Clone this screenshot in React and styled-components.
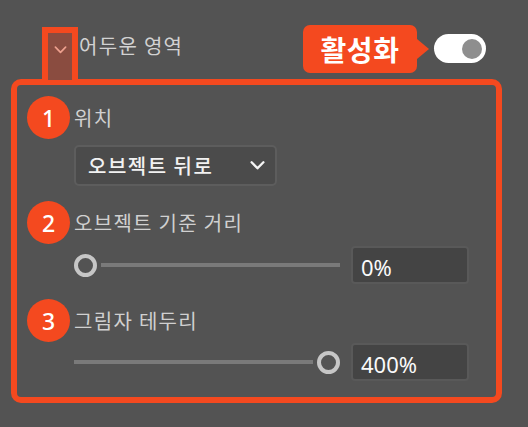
import React from "react";
import styled, { createGlobalStyle } from "styled-components";

const RED = "#f4491f";

const Global = createGlobalStyle`
  html, body { margin: 0; padding: 0; background: #535353; }
  body { font-family: "Noto Sans CJK KR", "Noto Sans", sans-serif; }
`;

const Page = styled.div`
  width: 528px;
  height: 427px;
  padding: 0 26px 0 11px;
  box-sizing: border-box;
  overflow: hidden;
`;

const Header = styled.div`
  display: flex;
  align-items: flex-start;
  height: 79px;
  padding-left: 31px;
  padding-right: 16px;
  position: relative;
  z-index: 1;
`;

const ChevronMark = styled.div`
  margin-top: 27px;
  width: 36px;
  height: 53px;
  box-sizing: border-box;
  border: 6px solid ${RED};
  border-bottom: none;
  background: #8a4c40;
  display: flex;
  justify-content: center;
  padding-top: 13px;
`;

const Title = styled.div`
  margin-top: 34px;
  margin-left: 1px;
  font-size: 20px;
  letter-spacing: 1.3px;
  line-height: 24px;
  color: #d2d2d2;
`;

const Spacer = styled.div`
  flex: 1;
`;

const Callout = styled.div`
  margin-top: 25px;
  height: 48px;
  width: 114px;
  background: ${RED};
  border-radius: 7px;
  color: #fff;
  font-weight: 700;
  font-size: 28px;
  letter-spacing: 0.5px;
  display: flex;
  align-items: center;
  justify-content: center;
  position: relative;
  margin-right: 17px;
  &::after {
    content: "";
    position: absolute;
    right: -12px;
    top: 14px;
    border-top: 10px solid transparent;
    border-bottom: 10px solid transparent;
    border-left: 12px solid ${RED};
  }
`;

const Toggle = styled.div`
  margin-top: 34px;
  width: 52px;
  height: 29px;
  border-radius: 15px;
  background: #fff;
  display: flex;
  align-items: center;
  justify-content: flex-end;
  padding-right: 4px;
  box-sizing: border-box;
`;

const ToggleKnob = styled.div`
  width: 20px;
  height: 20px;
  border-radius: 50%;
  background: #8e8e8e;
`;

const Frame = styled.div`
  width: 491px;
  height: 324px;
  box-sizing: border-box;
  border: 6px solid ${RED};
  border-radius: 10px;
  padding: 11px 0 0 10px;
  display: flex;
  flex-direction: column;
`;

const Section = styled.div`
  display: flex;
  flex-direction: column;
  margin-bottom: 15px;
`;

const LabelRow = styled.div`
  display: flex;
  align-items: center;
  height: 43px;
  gap: 4px;
`;

const Badge = styled.div`
  width: 43px;
  height: 43px;
  border-radius: 50%;
  background: ${RED};
  color: #fff;
  font-family: "Noto Sans", sans-serif;
  font-weight: 500;
  font-size: 23px;
  display: flex;
  align-items: center;
  justify-content: center;
`;

const Label = styled.div`
  font-size: 20px;
  letter-spacing: 1.3px;
  color: #d0d0d0;
  line-height: 24px;
`;

const Body = styled.div`
  margin-left: 47px;
  margin-top: ${(p) => p.$top}px;
  display: flex;
  align-items: center;
`;

const Dropdown = styled.div`
  width: 203px;
  height: 41px;
  box-sizing: border-box;
  background: #4b4b4b;
  border: 2px solid #5d5d5d;
  border-radius: 5px;
  display: flex;
  align-items: center;
  justify-content: space-between;
  padding: 0 10px 0 12px;
  color: #f2f2f2;
  font-size: 20px;
  letter-spacing: 1.5px;
  font-weight: 500;
`;

const Slider = styled.div`
  width: 266px;
  height: 38px;
  display: flex;
  align-items: center;
  gap: 4px;
`;

const Track = styled.div`
  flex: 1;
  height: 4px;
  background: #7a7a7a;
  order: ${(p) => (p.$end ? 0 : 1)};
`;

const Knob = styled.div`
  width: 23px;
  height: 23px;
  box-sizing: border-box;
  border-radius: 50%;
  border: 4px solid #c6c6c6;
  order: ${(p) => (p.$end ? 1 : 0)};
`;

const ValueBox = styled.div`
  margin-left: 11px;
  width: 118px;
  height: 38px;
  box-sizing: border-box;
  background: #444444;
  border: 2px solid #595959;
  border-radius: 4px;
  display: flex;
  align-items: center;
  padding: 3px 0 0 8px;
  color: #fafafa;
  font-family: "Noto Sans", sans-serif;
  font-size: 22px;
`;

const Chevron = ({ color, size = 14, width = 2 }) => (
  <svg width={size} height={size * 0.6} viewBox="0 0 14 8.4" fill="none">
    <path d="M1.5 1.2 L7 6.8 L12.5 1.2" stroke={color} strokeWidth={width} strokeLinecap="round" strokeLinejoin="round" />
  </svg>
);

const SliderRow = ({ end, value }) => (
  <>
    <Slider>
      <Track $end={end} />
      <Knob $end={end} />
    </Slider>
    <ValueBox>{value}</ValueBox>
  </>
);

export default function App() {
  return (
    <Page>
      <Global />
      <Header>
        <ChevronMark>
          <Chevron color="#eea08e" size={13} width={1.8} />
        </ChevronMark>
        <Title>어두운 영역</Title>
        <Spacer />
        <Callout>활성화</Callout>
        <Toggle>
          <ToggleKnob />
        </Toggle>
      </Header>
      <Frame>
        <Section>
          <LabelRow>
            <Badge>1</Badge>
            <Label>위치</Label>
          </LabelRow>
          <Body $top={6}>
            <Dropdown>
              <span>오브젝트 뒤로</span>
              <Chevron color="#f4f4f4" size={15} width={2.2} />
            </Dropdown>
          </Body>
        </Section>
        <Section>
          <LabelRow>
            <Badge>2</Badge>
            <Label>오브젝트 기준 거리</Label>
          </LabelRow>
          <Body $top={2}>
            <SliderRow value="0%" />
          </Body>
        </Section>
        <Section>
          <LabelRow>
            <Badge>3</Badge>
            <Label>그림자 테두리</Label>
          </LabelRow>
          <Body $top={1}>
            <SliderRow end value="400%" />
          </Body>
        </Section>
      </Frame>
    </Page>
  );
}
